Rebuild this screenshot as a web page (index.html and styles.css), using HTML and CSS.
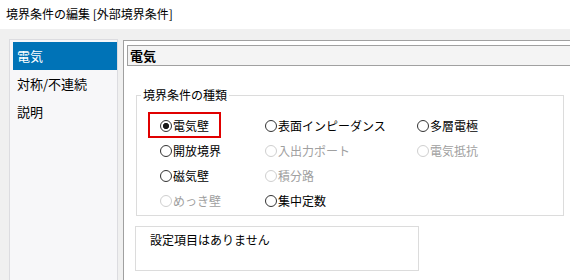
FILE: index.html
```html
<!DOCTYPE html>
<html lang="ja">
<head>
    <meta charset="UTF-8">
    <title>境界条件の編集</title>
    <link rel="stylesheet" href="styles.css">
</head>
<body>
    <div class="titlebar">境界条件の編集 [外部境界条件]</div>
    <div class="dialog">
        <!-- left side menu -->
        <ul class="nav">
            <li class="nav-item active">電気</li>
            <li class="nav-item">対称/不連続</li>
            <li class="nav-item">説明</li>
        </ul>

        <!-- page for the selected item -->
        <div class="page">
            <div class="page-header">電気</div>

            <fieldset class="group">
                <legend>境界条件の種類</legend>
                <div class="choices">
                    <span class="radio checked focused">電気壁</span>
                    <span class="radio">表面インピーダンス</span>
                    <span class="radio">多層電極</span>
                    <span class="radio">開放境界</span>
                    <span class="radio disabled">入出力ポート</span>
                    <span class="radio disabled">電気抵抗</span>
                    <span class="radio">磁気壁</span>
                    <span class="radio disabled">積分路</span>
                    <span></span>
                    <span class="radio disabled">めっき壁</span>
                    <span class="radio">集中定数</span>
                </div>
            </fieldset>

            <div class="info">設定項目はありません</div>
        </div>
    </div>
</body>
</html>
```

FILE: styles.css
```css
html, body {
    margin: 0;
    height: 100%;
}
body {
    font-family: "Noto Sans CJK JP", "Noto Sans", sans-serif;
    font-size: 12px;
    color: #000;
    background-color: #f0f0f0;
    overflow: hidden;
}
.titlebar {
    height: 29px;
    line-height: 28px;
    padding-left: 6px;
    background-color: #fff;
}
.dialog {
    display: flex;
    align-items: stretch;
    gap: 5px;
    padding-left: 9px;
    height: 260px;
}
.nav {
    list-style-type: none;
    margin: 10px 0 0 0;
    padding: 2px 0 0 3px;
    width: 104px;
    background-color: #f7f7f9;
    border: 1px solid #dcdce0;
    border-bottom: none;
    font-size: 13px;
}
.nav-item {
    height: 28px;
    line-height: 27px;
    padding-left: 4px;
}
.nav-item.active {
    background-color: #0073b7;
    color: #fff;
}
.page {
    flex: 1;
    margin-top: 11px;
    padding: 4px 0 0 3px;
    background-color: #fff;
    border-left: 1px solid #a0a0a0;
    border-top: 1px solid #a0a0a0;
}
.page-header {
    height: 19px;
    line-height: 19px;
    padding-left: 2px;
    font-size: 13px;
    font-weight: bold;
    background-color: #f4f4f4;
    border: 1px solid #a0a0a0;
    border-right: none;
}
.group {
    box-sizing: border-box;
    width: 428px;
    margin: 21px 0 0 9px;
    padding: 10px 0 2px 4px;
    border: 1px solid #dcdcdc;
    min-width: 0;
}
.group legend {
    padding: 0 2px;
    line-height: 16px;
}
.choices {
    display: grid;
    grid-template-columns: 105px 152px 1fr;
    grid-auto-rows: 25px;
    align-items: center;
    padding-left: 19px;
}
.radio {
    position: relative;
    display: flex;
    align-items: center;
    gap: 1px;
    line-height: 16px;
    white-space: nowrap;
}
.radio::before {
    content: "";
    box-sizing: border-box;
    width: 12px;
    height: 12px;
    border: 1px solid #333;
    border-radius: 50%;
    background-color: #fff;
}
.radio.checked::before {
    background: radial-gradient(circle, #1a1a1a 0 2.8px, #fff 3.3px);
}
.radio.disabled {
    color: #a0a0a0;
}
.radio.disabled::before {
    border-color: #cfcfcf;
}
.radio.focused::after {
    content: "";
    position: absolute;
    left: -12px;
    top: -6px;
    width: 69px;
    height: 22px;
    border: 2px solid #e00000;
}
.info {
    box-sizing: border-box;
    width: 284px;
    height: 45px;
    margin: 10px 0 0 8px;
    padding: 5px 14px;
    line-height: 16px;
    border: 1px solid #dcdcdc;
}
```
